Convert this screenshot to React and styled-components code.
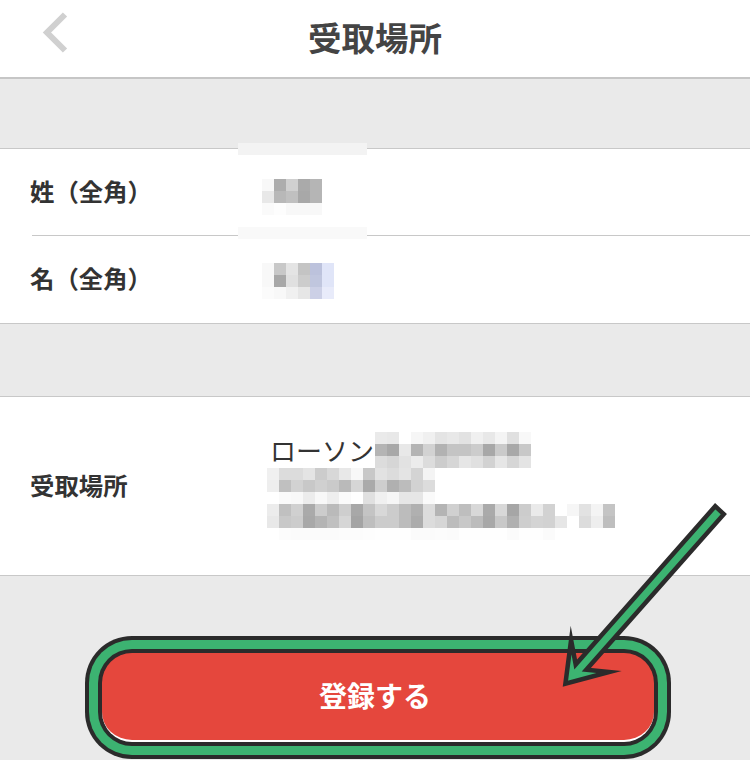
import React from "react";
import styled, { createGlobalStyle } from "styled-components";

const Global = createGlobalStyle`
  html, body { margin: 0; padding: 0; background: #eaeaea; }
  body { font-family: "Noto Sans CJK JP", "Noto Sans", sans-serif; }
  #root { height: 760px; overflow: hidden; }
`;

const Page = styled.div`
  position: relative;
  width: 750px;
  height: 760px;
  overflow: hidden;
  background: #eaeaea;
`;

const Header = styled.header`
  height: 77px;
  display: grid;
  grid-template-columns: 1fr auto 1fr;
  align-items: center;
  background: #fff;
  border-bottom: 2px solid #c6c6c6;
`;

const BackIcon = styled.svg`
  width: 80px;
  height: 77px;
  display: block;
`;

const Title = styled.h1`
  margin: 0;
  padding-bottom: 4px;
  font-size: 33.5px;
  line-height: 73px;
  font-weight: 700;
  color: #444;
`;

const Band = styled.div`
  height: ${(p) => p.$h}px;
`;

const Section = styled.section`
  background: #fff;
  border-top: 1px solid #c8c8c8;
  border-bottom: 1px solid #c8c8c8;
`;

const Row = styled.div`
  position: relative;
  display: flex;
  align-items: center;
  height: ${(p) => p.$h}px;
  padding-left: 30px;
`;

const Divider = styled.div`
  height: 1px;
  margin-left: 32px;
  background: #c8c8c8;
`;

const Label = styled.div`
  width: ${(p) => p.$w}px;
  flex: none;
  padding-bottom: 3px;
  font-size: 24.4px;
  line-height: 32px;
  font-weight: 700;
  color: #333;
`;

const Patch = styled.div`
  position: absolute;
  left: 238px;
  top: ${(p) => p.$top}px;
  width: 129px;
  height: 12px;
  background: ${(p) => p.$c};
`;

const Grid = styled.div`
  display: grid;
  grid-template-columns: repeat(${(p) => p.$cols}, 12px);
  grid-auto-rows: 12px;
  flex: none;
`;

const Cell = styled.span`
  background: ${(p) => p.$c};
`;

const NameValue = styled.div`
  margin-top: ${(p) => p.$top}px;
`;

const Address = styled.div`
  display: flex;
  flex-direction: column;
`;

const AddressFirst = styled.div`
  display: flex;
  align-items: center;
  gap: 8px;
  padding-left: 3px;
`;

const AddressText = styled.span`
  font-size: 26px;
  line-height: 36px;
  width: 97px;
  white-space: nowrap;
  color: #333;
`;

const Footer = styled.div`
  display: flex;
  justify-content: flex-start;
  padding: 77px 0 0 102px;
`;

const Submit = styled.button`
  box-sizing: border-box;
  width: 552px;
  height: 89px;
  padding: 0 6px 4px 0;
  border: 0;
  border-bottom: 2px solid #fff;
  border-radius: 30px;
  background: #e5473d;
  color: #fff;
  font-family: inherit;
  font-size: 28px;
  font-weight: 700;
  box-shadow: 0 0 0 4px #2b2b2b, 0 0 0 13px #3cb371, 0 0 0 17px #2b2b2b;
`;

const Arrow = styled.svg`
  position: absolute;
  left: 0;
  top: 0;
  width: 750px;
  height: 760px;
  pointer-events: none;
`;

const shade = (v) => {
  if (typeof v === "string") return v;
  const h = v.toString(16);
  return `#${h}${h}${h}`;
};

const Mosaic = ({ cols, cells }) => (
  <Grid $cols={cols}>
    {cells.map((c, i) => (
      <Cell key={i} $c={shade(c)} />
    ))}
  </Grid>
);

const sei = [
  0xf8, 0xad, 0xd0, 0xaa, 0xb5,
  0xe8, 0xb8, 0xc0, 0xa8, 0xb5,
  0xfa, 0xfd, 0xf8, 0xf8, 0xf8,
];
const mei = [
  0xf8, 0xc8, 0xe4, 0xc4, "#bcc2dc", "#e0e5f8",
  0xf8, 0xa8, 0xe0, 0xcc, "#c0c6de", "#e0e5f8",
  0xfb, 0xf8, 0xf0, 0xe6, "#ccd0e6", "#e8ebfa",
];
const addr1 = [
  0xea, 0xe8, 0xff, 0xf6, 0xf0, 0xe4, 0xe8, 0xe2, 0xf0, 0xe8, 0xf4, 0xe0, 0xf8,
  0xb4, 0xa8, 0xe8, 0xb4, 0xd2, 0xb2, 0xc4, 0xc4, 0xcc, 0xa8, 0xca, 0xa8, 0xc8,
  0xdc, 0xd6, 0xe2, 0xec, 0xdc, 0xcc, 0xd6, 0xe6, 0xe0, 0xd2, 0xe6, 0xd6, 0xe4,
];
const addr2 = [
  0xf0, 0xdc, 0xdc, 0xe4, 0xcc, 0xd8, 0xe8, 0xf8, 0xc8, 0xe2, 0xdc, 0xe4, 0xd4, 0xf4,
  0xee, 0xc0, 0xd2, 0xc8, 0xd0, 0xca, 0xba, 0xd6, 0xaa, 0xce, 0xb0, 0xbc, 0xd2, 0xdc,
  0xff, 0xfa, 0xf8, 0xec, 0xf8, 0xee, 0xfa, 0xff, 0xe0, 0xf0, 0xf6, 0xe6, 0xe6, 0xfa,
];
const addr3 = [
  0xec, 0xc0, 0xd0, 0xaa, 0xcc, 0xba, 0xce, 0xa8, 0xc4, 0xd8, 0xcc, 0xbc, 0xb0, 0xdc, 0xb4, 0xd0, 0xbe, 0xd8, 0xaa, 0xd8, 0xa6, 0xcc, 0xea, 0xd2, 0xff, 0xf6, 0xe2, 0xf4, 0xc4,
  0xe8, 0xc8, 0xcc, 0xa8, 0xb4, 0xc0, 0xd6, 0xa4, 0xbe, 0xcc, 0xcc, 0xbc, 0xac, 0xdc, 0xd6, 0xbc, 0xc8, 0xbc, 0xa8, 0xc8, 0xb0, 0xce, 0xd4, 0xd2, 0xe6, 0xff, 0xdc, 0xee, 0xbe,
  0xff, 0xfc, 0xfb, 0xfb, 0xfb, 0xfb, 0xfc, 0xfc, 0xfd, 0xfe, 0xfe, 0xfe, 0xfb, 0xfb, 0xfc, 0xfb, 0xfe, 0xfe, 0xfe, 0xfe, 0xfb, 0xfe, 0xfe, 0xfb, 0xff, 0xff, 0xff, 0xff, 0xff,
];

export default function App() {
  return (
    <Page>
      <Global />
      <Header>
        <BackIcon viewBox="0 0 80 77">
          <path d="M65 14.5 L47 32.5 L65 50.5" fill="none" stroke="#d0d0d0" strokeWidth="6" />
        </BackIcon>
        <Title>受取場所</Title>
      </Header>
      <Band $h={69} />
      <Section>
        <Row $h={86}>
          <Patch $top={-6} $c="#f3f3f3" />
          <Label $w={232}>姓（全角）</Label>
          <NameValue $top={10}>
            <Mosaic cols={5} cells={sei} />
          </NameValue>
        </Row>
        <Divider />
        <Row $h={87}>
          <Patch $top={-9} $c="#f9f9f9" />
          <Label $w={232}>名（全角）</Label>
          <NameValue $top={2}>
            <Mosaic cols={6} cells={mei} />
          </NameValue>
        </Row>
      </Section>
      <Band $h={72} />
      <Section>
        <Row $h={178}>
          <Label $w={237}>受取場所</Label>
          <Address>
            <AddressFirst>
              <AddressText>ローソン</AddressText>
              <Mosaic cols={13} cells={addr1} />
            </AddressFirst>
            <Mosaic cols={14} cells={addr2} />
            <Mosaic cols={29} cells={addr3} />
          </Address>
        </Row>
      </Section>
      <Footer>
        <Submit type="button">登録する</Submit>
      </Footer>
      <Arrow viewBox="0 0 750 760">
        <polygon
          points="715.2,506.2 723.8,514.2 586.3,669.8 609.1,672 565.4,683.7 571.1,640.1 575.7,664.5"
          fill="#3cb371"
          stroke="#2b2b2b"
          strokeWidth="4.5"
          strokeMiterlimit="12"
        />
      </Arrow>
    </Page>
  );
}
